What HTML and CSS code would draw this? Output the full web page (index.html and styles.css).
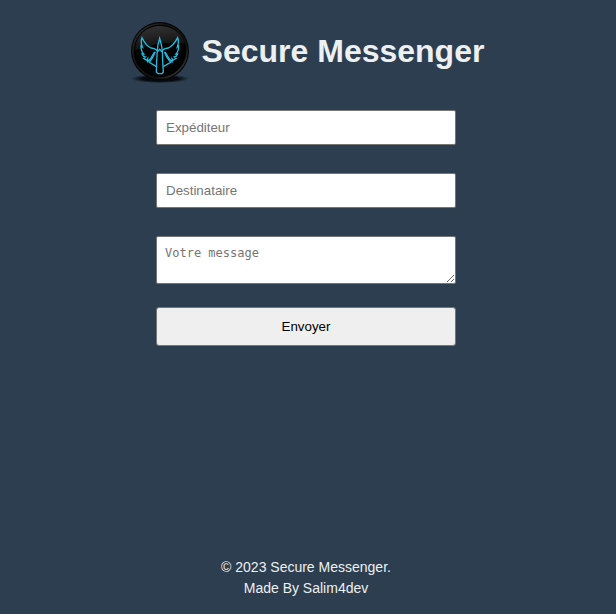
FILE: index.html
```html
<!DOCTYPE html>
<html lang="fr">
<head>
<meta charset="utf-8">
<meta name="viewport" content="width=device-width, initial-scale=1">
<title>Secure Messenger</title>
<link rel="stylesheet" href="styles.css">
</head>
<body>
<header class="header">
  <svg class="logo" viewBox="15 15 180 186" aria-hidden="true">
    <defs>
      <radialGradient id="shadow"><stop offset="0.6" stop-color="#05080c"/><stop offset="1" stop-color="#05080c" stop-opacity="0"/></radialGradient>
      <linearGradient id="rim" x1="0" y1="0" x2="1" y2="1"><stop offset="0" stop-color="#3a3a3a"/><stop offset="0.3" stop-color="#151515"/><stop offset="0.7" stop-color="#111"/><stop offset="1" stop-color="#444"/></linearGradient>
      <linearGradient id="shine" x1="0.2" y1="0" x2="0.5" y2="1"><stop offset="0" stop-color="#343434"/><stop offset="1" stop-color="#0c0c0c"/></linearGradient>
    </defs>
    <ellipse cx="105" cy="191" rx="88" ry="13" fill="url(#shadow)"/>
    <circle cx="105" cy="108" r="87" fill="#050505"/>
    <circle cx="105" cy="108" r="81" fill="#020202" stroke="url(#rim)" stroke-width="5"/>
    <path d="M31 107C30 62 65 33 105 33C145 33 174 59 179 87C137 78 80 87 31 107Z" fill="url(#shine)"/>
    <path d="M98 107L104 101L111 107L113 171H96Z" fill="#020202"/>
    <g fill="none" stroke="#25b9dc" stroke-width="4" stroke-linejoin="miter" stroke-linecap="round">
      <path d="M96 106L88 101L78 99Q62 91 51 68Q46 80 52 96L48 93Q48 109 56 117L51 117Q54 125 61 126L56 130L65 136L68 131V140L76 132L88 112"/>
      <path d="M112 106L120 101L130 99Q146 91 158 68Q163 80 157 96L161 93Q161 109 153 117L158 117Q155 125 148 126L153 130L144 136L141 131V140L133 132L121 112"/>
      <path d="M97 106L99 89L104 70L109 89L112 106M97 107L95 137L94 171L99 176H111L115 171L113 137L112 107M98 110L104 103L111 110"/>
      <path d="M90 112L84 126L73 142L93 154M119 112L125 126L137 142L116 154"/>
    </g>
  </svg>
  <h1 class="title">Secure Messenger</h1>
</header>
<main class="main">
  <form class="form">
    <input class="field" type="text" placeholder="Expéditeur" aria-label="Expéditeur">
    <input class="field" type="text" placeholder="Destinataire" aria-label="Destinataire">
    <textarea class="field message" rows="2" placeholder="Votre message" aria-label="Votre message"></textarea>
    <button class="send" type="submit">Envoyer</button>
  </form>
</main>
<footer class="footer">
  <p>© 2023 Secure Messenger.</p>
  <p>Made By Salim4dev</p>
</footer>
</body>
</html>
```
FILE: styles.css
```css
* {
  box-sizing: border-box;
}

body {
  display: flex;
  flex-direction: column;
  min-height: 100vh;
  margin: 0;
  padding: 20px 4px 15px 0;
  background: #2c3e50;
  color: #ecf0f1;
  font-family: "Liberation Sans", Arial, sans-serif;
}

.header {
  display: flex;
  justify-content: center;
  align-items: center;
  gap: 12px;
  padding-left: 2px;
}

.logo {
  width: 60px;
  height: 62px;
  overflow: visible;
}

.title {
  margin: 0;
  font-size: 32px;
  line-height: 36px;
}

.main {
  flex: 1;
  padding: 28px 16px;
}

.form {
  display: flex;
  flex-direction: column;
  max-width: 300px;
  margin: 0 auto;
}

.field {
  width: 100%;
  height: 35px;
  margin: 0 0 28px;
  padding: 8px 9px;
  border: 1px solid #767676;
  border-radius: 2px;
  background: #fff;
  color: #000;
  font-family: "Liberation Sans", Arial, sans-serif;
}

.field::placeholder {
  color: #757575;
}

.message {
  height: 48px;
  margin-bottom: 23px;
  padding: 8px;
  font: 12px/16px "DejaVu Sans Mono", monospace;
}

.send {
  height: 39px;
  border: 1px solid #767676;
  border-radius: 3px;
  background: #efefef;
  color: #000;
  font-family: "Liberation Sans", Arial, sans-serif;
}

.footer {
  font-size: 14px;
  line-height: 21px;
  text-align: center;
}

.footer p {
  margin: 0;
}
```
